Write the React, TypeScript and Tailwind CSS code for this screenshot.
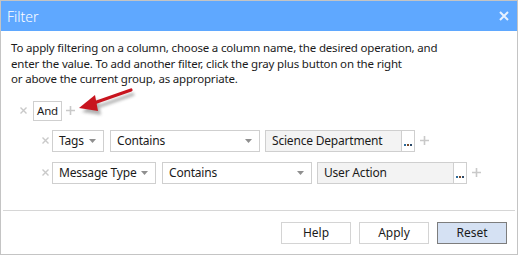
import React from "react";

const font = { fontFamily: '"Segoe UI", "Noto Sans", sans-serif' };

function Caret() {
  return (
    <svg width="7" height="4" viewBox="0 0 7 4" className="shrink-0">
      <path d="M0 0h7L3.5 4z" fill="#8f8f8f" />
    </svg>
  );
}

function Cross() {
  return (
    <svg width="7" height="7" viewBox="0 0 7 7" className="shrink-0">
      <path d="M0.5 0.5l6 6M6.5 0.5l-6 6" stroke="#c9c9c9" strokeWidth="1.4" />
    </svg>
  );
}

function Plus() {
  return (
    <svg width="9" height="9" viewBox="0 0 9 9" className="shrink-0">
      <path d="M4.5 0v9M0 4.5h9" stroke="#c9c9c9" strokeWidth="1.6" />
    </svg>
  );
}

function Select({ label, w }: { label: string; w: string }) {
  return (
    <div className={`${w} shrink-0 h-[22px] border border-[#cfcfcf] bg-white flex items-center justify-between pl-[6px] pr-[7px] text-[12px] tracking-[-0.2px] whitespace-nowrap text-[#1b1b1b]`}>
      <span>{label}</span>
      <Caret />
    </div>
  );
}

function ValueBox({ value }: { value: string }) {
  return (
    <div className="flex h-[22px] shrink-0">
      <div className="w-[137px] border border-[#cfcfcf] bg-[#f3f3f3] flex items-center pl-[6px] text-[12px] tracking-[-0.2px] whitespace-nowrap text-[#1b1b1b]">
        {value}
      </div>
      <div className="w-[13px] border border-l-0 border-[#cfcfcf] bg-white flex items-end justify-center pb-[5px]">
        <span className="flex gap-[1px]">
          <span className="w-[2px] h-[2px] bg-[#2b6a9a]" />
          <span className="w-[2px] h-[2px] bg-[#7a4a2a]" />
          <span className="w-[2px] h-[2px] bg-[#2b4a6a]" />
        </span>
      </div>
    </div>
  );
}

function Row({ field, fieldW, value }: { field: string; fieldW: string; value: string }) {
  return (
    <div className="flex items-center h-[22px]">
      <div className="w-[14px] flex justify-center ml-[37px]"><Cross /></div>
      <Select label={field} w={fieldW} />
      <div className="w-[6px] shrink-0" />
      <Select label="Contains" w="w-[150px]" />
      <div className="w-[5px] shrink-0" />
      <ValueBox value={value} />
      <div className="ml-[5px]"><Plus /></div>
    </div>
  );
}

export default function App() {
  return (
    <div className="w-[518px] h-[255px] bg-white border border-[#c4c4c4] flex flex-col relative" style={font}>
      <div className="h-[30px] bg-[#5fa8ff] flex items-center justify-between pl-[6px] pr-[8px]">
        <span className="text-white text-[14px] font-light">Filter</span>
        <svg width="10" height="10" viewBox="0 0 10 10">
          <path d="M1 1l8 8M9 1l-8 8" stroke="#e6f1ff" strokeWidth="2" />
        </svg>
      </div>

      <div className="px-[10px] pt-[9px] text-[11.5px] tracking-[-0.18px] leading-[15.5px] text-[#1b1b1b]">
        <p>To apply filtering on a column, choose a column name, the desired operation, and</p>
        <p>enter the value. To add another filter, click the gray plus button on the right</p>
        <p>or above the current group, as appropriate.</p>
      </div>

      <div className="flex items-center mt-[14px] h-[20px]">
        <div className="w-[14px] flex justify-center ml-[15px]"><Cross /></div>
        <div className="ml-[3px] h-[20px] w-[29px] border border-[#cfcfcf] bg-white flex items-center justify-center text-[11.5px] tracking-[-0.2px] text-[#1b1b1b]">
          And
        </div>
        <div className="ml-[4px]"><Plus /></div>
      </div>

      <div className="flex flex-col gap-[10px] mt-[9px]">
        <Row field="Tags" fieldW="w-[52px]" value="Science Department" />
        <Row field="Message Type" fieldW="w-[104px]" value="User Action" />
      </div>

      <div className="mt-auto border-t border-[#d6d6d6] mx-[2px] flex justify-end gap-[8px] pt-[11px] pb-[10px] pr-[8px]">
        <button className="w-[70px] h-[22px] border border-[#d4d4d4] bg-white text-[12px] text-[#1b1b1b]">Help</button>
        <button className="w-[70px] h-[22px] border border-[#d4d4d4] bg-white text-[12px] text-[#1b1b1b]">Apply</button>
        <button className="w-[70px] h-[22px] border border-[#7d7d7d] bg-[#d5e1f3] text-[12px] text-[#1b1b1b]">Reset</button>
      </div>

      <svg className="absolute left-[70px] top-[80px] pointer-events-none" width="75" height="40" viewBox="0 0 75 40">
        <defs>
          <filter id="sh" x="-20%" y="-20%" width="150%" height="160%">
            <feGaussianBlur stdDeviation="1.5" />
          </filter>
        </defs>
        <g filter="url(#sh)" opacity="0.45" transform="translate(3,4)">
          <path d="M60 9L20 23" stroke="#555" strokeWidth="3" />
          <path d="M8 27L24 14L27 30z" fill="#555" />
        </g>
        <path d="M60 9L20 23" stroke="#c8141e" strokeWidth="3.2" strokeLinecap="round" />
        <path d="M8 27L24 14L27 30z" fill="#c8141e" />
      </svg>
    </div>
  );
}
